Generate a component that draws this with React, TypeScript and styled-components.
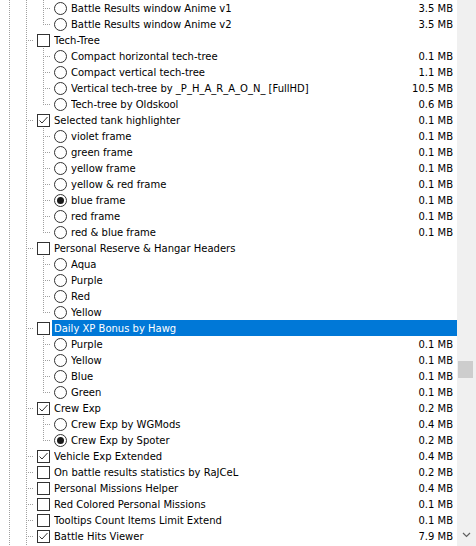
import React from 'react';
import styled, { createGlobalStyle, css } from 'styled-components';

const GlobalStyle = createGlobalStyle`
    html, body {
        margin: 0;
        padding: 0;
        background: #ffffff;
    }
    body {
        font-family: "DejaVu Sans", "Liberation Sans", sans-serif;
        font-size: 10px;
        color: #000000;
    }
`

const Window = styled.div`
    display: flex;
    width: 476px;
    height: 546px;
    overflow: hidden;
    background: #ffffff;
`

const List = styled.div`
    display: flex;
    flex-direction: column;
    flex: 1;
    min-width: 0;
`

const Row = styled.div`
    display: flex;
    align-items: center;
    height: 16px;
    flex-shrink: 0;
`

type GuideKind = 'line' | 'tee' | 'end';

const dotsV = 'repeating-linear-gradient(to bottom, #a0a0a0 0 1px, transparent 1px 2px)';
const dotsH = 'repeating-linear-gradient(to right, #a0a0a0 0 1px, transparent 1px 2px)';

const Guide = styled.div<{ $kind: GuideKind }>`
    width: 17px;
    height: 16px;
    flex-shrink: 0;
    background-repeat: no-repeat;
    ${(p) => p.$kind === 'line' && css`
        background-image: ${dotsV};
        background-size: 1px 16px;
        background-position: 9px 0;
    `}
    ${(p) => p.$kind === 'tee' && css`
        background-image: ${dotsV}, ${dotsH};
        background-size: 1px 16px, 8px 1px;
        background-position: 9px 0, 9px 8px;
    `}
    ${(p) => p.$kind === 'end' && css`
        background-image: ${dotsV}, ${dotsH};
        background-size: 1px 9px, 8px 1px;
        background-position: 9px 0, 9px 8px;
    `}
`

const Box = styled.div`
    width: 13px;
    height: 13px;
    margin-left: 3px;
    margin-right: 2px;
    flex-shrink: 0;
    box-sizing: border-box;
    border: 1px solid #333333;
    background: #ffffff;
    display: flex;

    svg {
        display: block;
    }
`

const Radio = styled.div`
    width: 13px;
    height: 13px;
    margin-left: 3px;
    margin-right: 2px;
    flex-shrink: 0;

    svg {
        display: block;
    }
`

const Content = styled.div<{ $selected?: boolean }>`
    flex: 1;
    min-width: 0;
    height: 16px;
    box-sizing: border-box;
    display: flex;
    align-items: flex-start;
    padding: 1px 4px 0 2px;
    background: ${(p) => (p.$selected ? '#0078d7' : 'transparent')};
    color: ${(p) => (p.$selected ? '#ffffff' : '#000000')};
`

const Name = styled.span`
    flex: 1;
    white-space: nowrap;
    overflow: hidden;
    line-height: 15px;
`

const Size = styled.span`
    flex-shrink: 0;
    text-align: right;
    white-space: nowrap;
    line-height: 15px;
`

const Scrollbar = styled.div`
    width: 19px;
    flex-shrink: 0;
    background: #f0f0f0;
    display: flex;
    flex-direction: column;
`

const Thumb = styled.div`
    width: 15px;
    height: 17px;
    margin-left: 1px;
    background: #cdcdcd;
`

const Track = styled.div`
    flex: 1;
`

const DownButton = styled.div`
    height: 14px;
    display: flex;
    justify-content: center;

    svg {
        display: block;
    }
`

type Item = {
    level: 1 | 2;
    kind: 'check' | 'radio';
    label: string;
    size?: string;
    on?: boolean;
    last?: boolean;
    selected?: boolean;
};

const items: Item[] = [
    { level: 2, kind: 'radio', label: 'Battle Results window Anime v1', size: '3.5 MB' },
    { level: 2, kind: 'radio', label: 'Battle Results window Anime v2', size: '3.5 MB', last: true },
    { level: 1, kind: 'check', label: 'Tech-Tree' },
    { level: 2, kind: 'radio', label: 'Compact horizontal tech-tree', size: '0.1 MB' },
    { level: 2, kind: 'radio', label: 'Compact vertical tech-tree', size: '1.1 MB' },
    { level: 2, kind: 'radio', label: 'Vertical tech-tree by _P_H_A_R_A_O_N_ [FullHD]', size: '10.5 MB' },
    { level: 2, kind: 'radio', label: 'Tech-tree by Oldskool', size: '0.6 MB', last: true },
    { level: 1, kind: 'check', label: 'Selected tank highlighter', size: '0.1 MB', on: true },
    { level: 2, kind: 'radio', label: 'violet frame', size: '0.1 MB' },
    { level: 2, kind: 'radio', label: 'green frame', size: '0.1 MB' },
    { level: 2, kind: 'radio', label: 'yellow frame', size: '0.1 MB' },
    { level: 2, kind: 'radio', label: 'yellow & red frame', size: '0.1 MB' },
    { level: 2, kind: 'radio', label: 'blue frame', size: '0.1 MB', on: true },
    { level: 2, kind: 'radio', label: 'red frame', size: '0.1 MB' },
    { level: 2, kind: 'radio', label: 'red & blue frame', size: '0.1 MB', last: true },
    { level: 1, kind: 'check', label: 'Personal Reserve & Hangar Headers' },
    { level: 2, kind: 'radio', label: 'Aqua' },
    { level: 2, kind: 'radio', label: 'Purple' },
    { level: 2, kind: 'radio', label: 'Red' },
    { level: 2, kind: 'radio', label: 'Yellow', last: true },
    { level: 1, kind: 'check', label: 'Daily XP Bonus by Hawg', selected: true },
    { level: 2, kind: 'radio', label: 'Purple', size: '0.1 MB' },
    { level: 2, kind: 'radio', label: 'Yellow', size: '0.1 MB' },
    { level: 2, kind: 'radio', label: 'Blue', size: '0.1 MB' },
    { level: 2, kind: 'radio', label: 'Green', size: '0.1 MB', last: true },
    { level: 1, kind: 'check', label: 'Crew Exp', size: '0.2 MB', on: true },
    { level: 2, kind: 'radio', label: 'Crew Exp by WGMods', size: '0.4 MB' },
    { level: 2, kind: 'radio', label: 'Crew Exp by Spoter', size: '0.2 MB', on: true, last: true },
    { level: 1, kind: 'check', label: 'Vehicle Exp Extended', size: '0.4 MB', on: true },
    { level: 1, kind: 'check', label: 'On battle results statistics by RaJCeL', size: '0.2 MB' },
    { level: 1, kind: 'check', label: 'Personal Missions Helper', size: '0.4 MB' },
    { level: 1, kind: 'check', label: 'Red Colored Personal Missions', size: '0.1 MB' },
    { level: 1, kind: 'check', label: 'Tooltips Count Items Limit Extend', size: '0.1 MB' },
    { level: 1, kind: 'check', label: 'Battle Hits Viewer', size: '7.9 MB', on: true },
    { level: 1, kind: 'check', label: '' },
];

const CheckMark = () => (
    <svg width="11" height="11" viewBox="0 0 11 11">
        <path d="M1.5 5.5 L4 8 L9.5 2" fill="none" stroke="#333333" strokeWidth="1" />
    </svg>
);

const RadioMark: React.FC<{ on?: boolean }> = ({ on }) => (
    <svg width="13" height="13" viewBox="0 0 13 13">
        <circle cx="6.5" cy="6.5" r="6" fill="#ffffff" stroke="#333333" strokeWidth="1" />
        {on && <circle cx="6.5" cy="6.5" r="3.5" fill="#1a1a1a" />}
    </svg>
);

const TreeRow: React.FC<{ item: Item }> = ({ item }) => {
    const guides: GuideKind[] = item.level === 1
        ? ['line', 'tee']
        : ['line', 'line', item.last ? 'end' : 'tee'];

    return (
        <Row>
            {guides.map((g, i) => <Guide key={i} $kind={g} />)}
            {item.kind === 'check'
                ? <Box>{item.on && <CheckMark />}</Box>
                : <Radio><RadioMark on={item.on} /></Radio>}
            <Content $selected={item.selected}>
                <Name>{item.label}</Name>
                <Size>{item.size}</Size>
            </Content>
        </Row>
    );
};

const App: React.FC = () => {
    return (
        <>
            <GlobalStyle />
            <Window>
                <List>
                    {items.map((item, i) => <TreeRow key={i} item={item} />)}
                </List>
                <Scrollbar>
                    <Track>
                        <Thumb style={{ marginTop: 361 }} />
                    </Track>
                    <DownButton>
                        <svg width="9" height="6" viewBox="0 0 9 6">
                            <path d="M1 1 L4.5 4.5 L8 1" fill="none" stroke="#606060" strokeWidth="1.2" />
                        </svg>
                    </DownButton>
                </Scrollbar>
            </Window>
        </>
    );
};

export default App;
